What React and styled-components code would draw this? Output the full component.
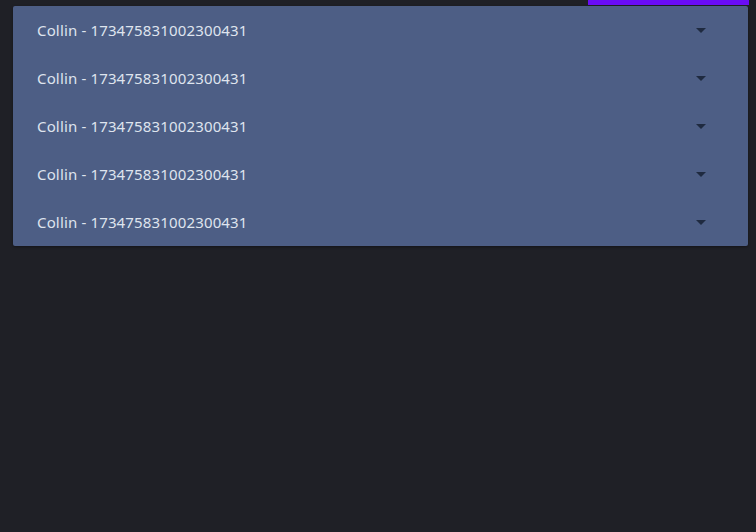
import React from "react";
import styled, { createGlobalStyle } from "styled-components";

const GlobalStyle = createGlobalStyle`
  html, body {
    margin: 0;
    padding: 0;
    background: #1f2026;
  }
  body {
    font-family: "Noto Sans", "Open Sans", sans-serif;
  }
`;

const Page = styled.div`
  width: 756px;
  height: 532px;
  background: #1f2026;
  position: relative;
  overflow: hidden;
`;

const TopAccent = styled.div`
  position: absolute;
  top: 0;
  left: 588px;
  width: 161px;
  height: 5px;
  background: #6a0cf5;
`;

const Content = styled.div`
  padding: 6px 8px 0 13px;
`;

const Panel = styled.ul`
  list-style: none;
  margin: 0;
  padding: 0;
  background: #4d5e85;
  border-radius: 2px;
  box-shadow: 0 1px 3px rgba(0, 0, 0, 0.4);
`;

const Row = styled.li`
  height: 48px;
  display: flex;
  align-items: center;
  justify-content: space-between;
  padding: 0 42px 0 24px;
  cursor: pointer;
`;

const Label = styled.span`
  font-size: 15px;
  color: #dfe4ee;
  letter-spacing: 0.15px;
`;

const Caret = styled.span`
  width: 0;
  height: 0;
  border-left: 5px solid transparent;
  border-right: 5px solid transparent;
  border-top: 5px solid #1f2a40;
`;

const items = Array.from({ length: 5 }, () => "Collin - 173475831002300431");

function App() {
  return (
    <Page>
      <GlobalStyle />
      <TopAccent />
      <Content>
        <Panel>
          {items.map((text, i) => (
            <Row key={i}>
              <Label>{text}</Label>
              <Caret />
            </Row>
          ))}
        </Panel>
      </Content>
    </Page>
  );
}

export default App;
